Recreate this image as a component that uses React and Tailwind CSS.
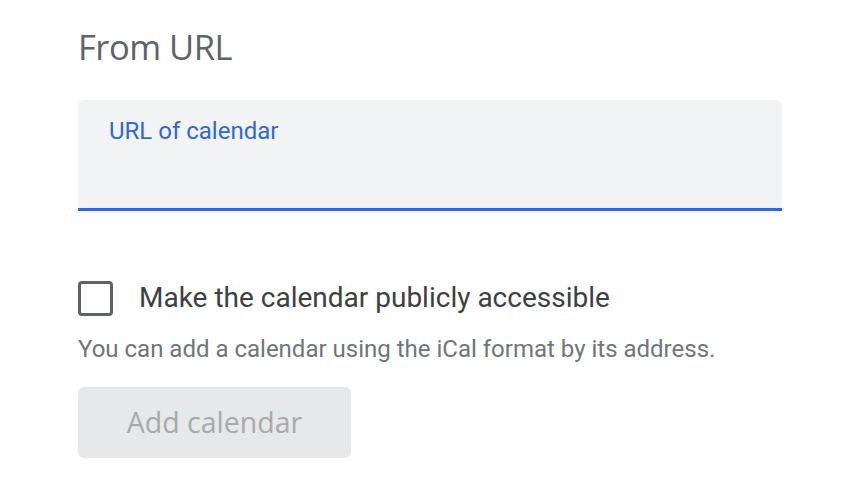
export default function App() {
  return (
    <div className="w-[862px] h-[498px] bg-white pl-[78px] pt-[24px]" style={{ fontFamily: "Roboto, 'Liberation Sans', sans-serif" }}>
      <h2 className="text-[34.5px] leading-[46px] text-[#5f6368] font-['Open_Sans',sans-serif] tracking-[-0.5px]">From URL</h2>
      <div className="mt-[30px] w-[704px] h-[111px] bg-[#f1f3f4] rounded-t-[6px] border-b-[3px] border-[#3367d6] pl-[31px] pt-[15px]">
        <div className="text-[24px] leading-[32px] text-[#3367d6]">URL of calendar</div>
      </div>
      <div className="mt-[69px] flex items-center">
        <div className="w-[35px] h-[35px] border-[3px] border-[#5f6368] rounded-[4px]" />
        <span className="ml-[26px] text-[28px] leading-[36px] text-[#3c4043]">Make the calendar publicly accessible</span>
      </div>
      <p className="mt-[18px] text-[24px] leading-[30px] text-[#70757a]">You can add a calendar using the iCal format by its address.</p>
      <div className="mt-[23px] w-[273px] h-[71px] bg-[#e7e8e9] rounded-[6px] flex items-center justify-center">
        <span className="text-[28.5px] font-medium text-[#a8aaab] font-['Open_Sans',sans-serif]">Add calendar</span>
      </div>
    </div>
  );
}
